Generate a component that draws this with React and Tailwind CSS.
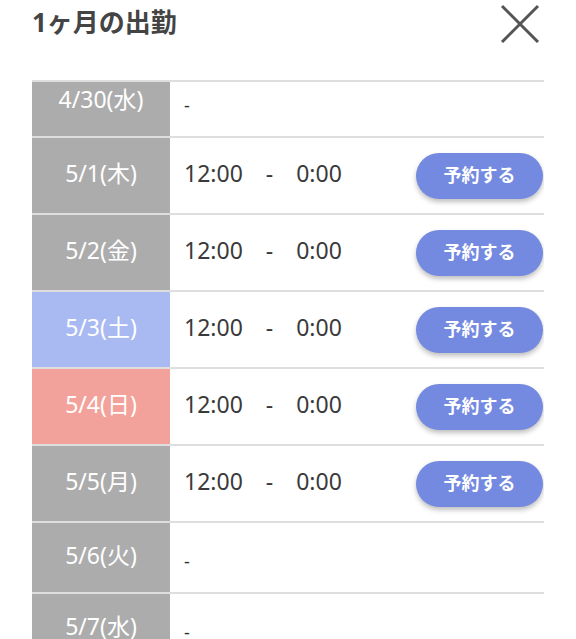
import React from "react";

const rows = [
  { date: "4/30(水)", type: "gray", open: false },
  { date: "5/1(木)", type: "gray", open: true },
  { date: "5/2(金)", type: "gray", open: true },
  { date: "5/3(土)", type: "blue", open: true },
  { date: "5/4(日)", type: "red", open: true },
  { date: "5/5(月)", type: "gray", open: true },
  { date: "5/6(火)", type: "gray", open: false },
  { date: "5/7(水)", type: "gray", open: false },
];

const dayBg = {
  gray: "bg-[#acacac]",
  blue: "bg-[#a9b9f1]",
  red: "bg-[#f3a29b]",
};

function Row({ row }) {
  return (
    <div
      className={`flex border-b-2 border-[#dedede] ${row.open ? "h-[77px]" : "h-[71px]"}`}
    >
      <div
        className={`w-[138px] shrink-0 flex items-center justify-center pb-[4px] text-white text-[23px] ${dayBg[row.type]}`}
      >
        {row.date}
      </div>
      {row.open ? (
        <div className="flex-1 flex items-center pl-[14px] pr-[1px]">
          <div className="flex items-center gap-[23px] pb-[4px] text-[23px] text-[#3a3a3a]">
            <span>12:00</span>
            <span>-</span>
            <span>0:00</span>
          </div>
          <button className="ml-auto w-[127px] h-[46px] rounded-full bg-[#7489e0] text-white text-[18px] font-bold shadow-[0_3px_5px_rgba(0,0,0,0.25)]">
            予約する
          </button>
        </div>
      ) : (
        <div className="flex-1 flex items-center pl-[14px] pt-[8px] text-[18px] text-[#333]">
          -
        </div>
      )}
    </div>
  );
}

export default function App() {
  return (
    <div
      className="w-[576px] h-[639px] overflow-hidden bg-white"
      style={{ fontFamily: '"Noto Sans", "Noto Sans CJK JP", sans-serif' }}
    >
      <div className="flex items-start justify-between pl-[32px] pr-[36px] h-[80px]">
        <h1 className="mt-[3px] text-[26px] font-bold text-[#444]">1ヶ月の出勤</h1>
        <svg width="40" height="40" viewBox="0 0 40 40" className="mt-[3px]">
          <path d="M2 3 L38 39 M38 3 L2 39" stroke="#555" strokeWidth="3" fill="none" />
        </svg>
      </div>
      <div className="mx-[32px] border-t-2 border-[#dedede] overflow-hidden h-[559px]">
        <div className="-mt-[15px]">
          {rows.map((r) => (
            <Row key={r.date} row={r} />
          ))}
        </div>
      </div>
    </div>
  );
}
